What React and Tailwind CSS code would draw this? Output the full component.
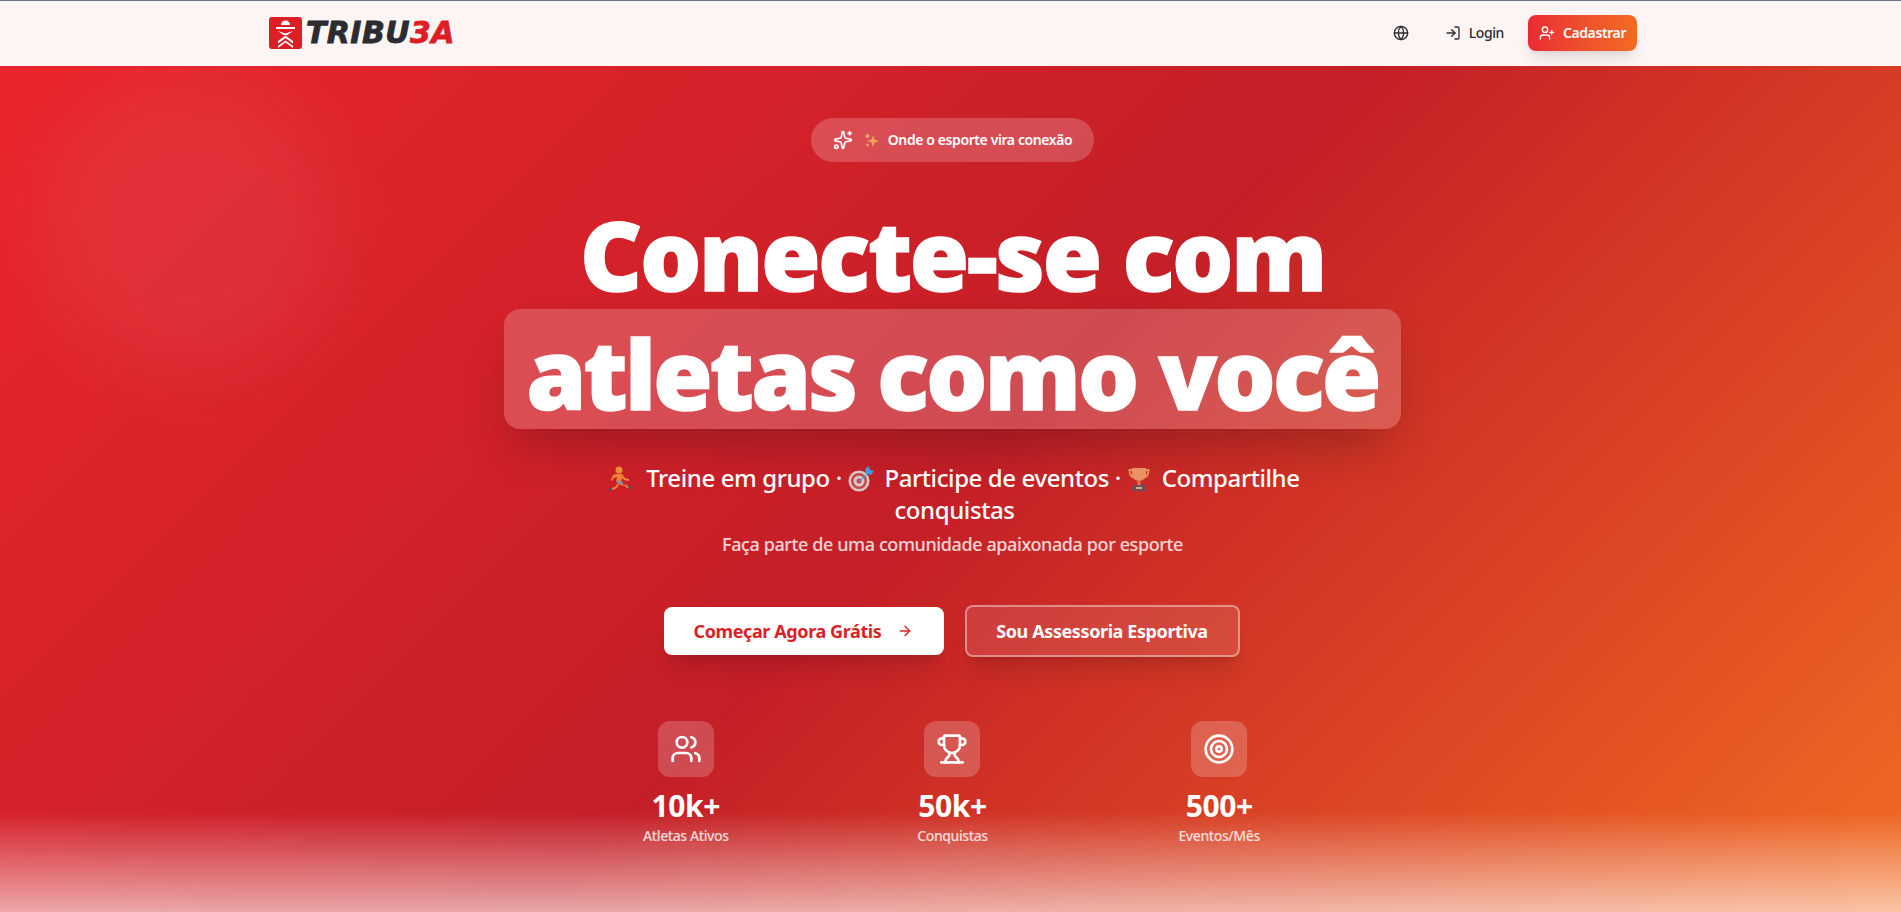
import React from 'react';
import { Globe, LogIn, UserPlus, Sparkles, ArrowRight, Users, Trophy, Target } from 'lucide-react';

const stats = [
  { icon: Users, value: '10k+', label: 'Atletas Ativos' },
  { icon: Trophy, value: '50k+', label: 'Conquistas' },
  { icon: Target, value: '500+', label: 'Eventos/Mês' },
];

function LogoMark() {
  return (
    <svg width="33" height="33" viewBox="0 0 33 33">
      <rect width="33" height="32" rx="3" fill="#dc1f26" />
      <path d="M12 8a4.500 4.500 0 0 1 9 0z" fill="#fff" />
      <path d="M7 10h19v2H7z" fill="#fff" />
      <path d="M9 14l7.500 2.500L24 14l-5.500 4h-4z" fill="#fff" />
      <path d="M9 24l7.500-5.500L24 24v2.500l-7.500-5.500L9 26.500zM9 29l7.500-5.500L24 29v2l-7.500-5.500L9 31z" fill="#fff" />
    </svg>
  );
}

function RunnerEmoji() {
  return (
    <svg width="24" height="26" viewBox="0 0 24 26" className="mr-[7px] inline-block align-[-5px]">
      <circle cx="10" cy="4" r="3.500" fill="#f08a3c" />
      <path d="M7 8h6l3 4 4 1v2l-5-1-2-2-1 4H7l1-5-3 1-2 3-1-1 2-5z" fill="#ee8236" />
      <path d="M7 15h6l1 3-3 1-2-1z" fill="#8b8f9e" />
      <path d="M12 18l6 1 2 3-2 0-2-2-5-1zM8 18l2 1-3 4-5 1v-2l4-1z" fill="#ee8236" />
      <path d="M1 22l2 0 0 3-2 0zM19 20l3 0 0 3-2 0z" fill="#48546e" />
    </svg>
  );
}

function TargetEmoji() {
  return (
    <svg width="26" height="26" viewBox="0 0 26 26" className="mr-[5px] inline-block align-[-5px]">
      <circle cx="11" cy="15" r="10.500" fill="#d9c8c8" />
      <circle cx="11" cy="15" r="8" fill="#c4474c" />
      <circle cx="11" cy="15" r="5.500" fill="#d8c6c8" />
      <circle cx="11" cy="15" r="2.500" fill="#c4474c" />
      <path d="M11 15l7-7-1-5 4-3 1 4 4 1-3 4-4-1-7 8z" fill="#3f9bdc" />
    </svg>
  );
}

function TrophyEmoji() {
  return (
    <svg width="24" height="26" viewBox="0 0 24 26" className="mr-[5px] inline-block align-[-5px]">
      <path d="M6 4H2.500c0 4 1.500 7 5 7.500M18 4h3.500c0 4-1.500 7-5 7.500" fill="none" stroke="#e8935a" strokeWidth="2" />
      <path d="M5 2h14v6c0 4-3 7-7 7s-7-3-7-7z" fill="#ec9363" />
      <path d="M10.500 14h3v5h-3z" fill="#d57a45" />
      <path d="M6 19h12l1 6H5z" fill="#6c4b63" />
      <path d="M9 21h6v2H9z" fill="#dca97c" />
    </svg>
  );
}

function SparkleEmoji() {
  return (
    <svg width="16" height="16" viewBox="0 0 16 16" className="ml-[3px] shrink-0">
      <path d="M9 3l1.500 4.500L15 9l-4.500 1.500L9 15l-1.500-4.500L3 9l4.500-1.500z" fill="#f3a35c" />
      <path d="M3.500 1l.8 2.200 2.200.8-2.200.8-.8 2.200-.8-2.200L.5 4l2.200-.8z" fill="#f6bd78" />
      <path d="M3.500 11l.6 1.400 1.400.6-1.400.6-.6 1.400-.6-1.400-1.400-.6 1.400-.6z" fill="#f6bd78" />
    </svg>
  );
}

export default function App() {
  return (
    <div className="relative h-[912px] overflow-hidden bg-white font-['Noto_Sans','Open_Sans',sans-serif] tracking-tight">
      <header className="h-[66px] border-t border-[#6d7187] bg-[#fdf4f4]">
        <div className="mx-auto flex h-[64px] max-w-[1373px] items-center justify-between pl-[5px]">
          <div className="flex items-center gap-[4px]">
            <LogoMark />
            <span className="font-['DejaVu_Sans',sans-serif] text-[30px] font-bold italic leading-none tracking-[0.4px] text-[#2c2c30] [-webkit-text-stroke:0.8px_#2c2c30]">
              TRIBU<span className="text-[#dc1f26] [-webkit-text-stroke:0.8px_#dc1f26]">3A</span>
            </span>
          </div>
          <div className="flex items-center text-[#2b2b35]">
            <Globe className="mr-[36px] h-4 w-4" />
            <LogIn className="mr-[8px] h-4 w-4" />
            <span className="mr-6 text-sm font-medium">Login</span>
            <button className="flex h-[36px] w-[109px] items-center justify-center gap-2 rounded-lg bg-gradient-to-r from-[#ea2a33] to-[#f26b22] text-sm font-semibold text-white shadow-lg">
              <UserPlus className="h-4 w-4" />
              Cadastrar
            </button>
          </div>
        </div>
      </header>

      <main className="relative h-[846px] overflow-hidden bg-[linear-gradient(135deg,#ea252d_0%,#c41f27_50%,#f26b22_100%)]">
        <div className="absolute left-[40px] top-[10px] h-[300px] w-[300px] rounded-full bg-white/[0.06] blur-2xl" />
        <div className="absolute bottom-0 left-0 right-0 h-[100px] bg-gradient-to-b from-transparent to-white/60" />

        <div className="relative flex flex-col items-center pl-1 pt-[52px] text-center text-white">
          <div className="flex h-[44px] w-[283px] items-center justify-center gap-2 rounded-full bg-white/20 text-sm font-semibold">
            <Sparkles className="h-5 w-5" />
            <SparkleEmoji />
            <span>Onde o esporte vira conexão</span>
          </div>

          <h1 className="mt-[34px] whitespace-nowrap text-[96px] font-black leading-[115px] tracking-[-2.2px] [-webkit-text-stroke:1.5px_#fff]">Conecte-se com</h1>
          <div className="mt-[-2px] flex h-[120px] w-[897px] items-center justify-center whitespace-nowrap rounded-2xl bg-white/20 pt-2 text-[96px] font-black leading-none tracking-[-2.75px] shadow-2xl [-webkit-text-stroke:1.5px_#fff]">
            atletas como você
          </div>

          <p className="mt-[33px] max-w-3xl pl-1 text-2xl font-medium leading-8">
            <RunnerEmoji /> Treine em grupo · <TargetEmoji /> Participe de eventos · <TrophyEmoji /> Compartilhe conquistas
          </p>
          <p className="mt-[4px] text-lg font-medium leading-7 text-white/80">Faça parte de uma comunidade apaixonada por esporte</p>

          <div className="mt-[47px] flex items-center gap-[21px] pr-[2px] text-lg font-bold">
            <button className="flex h-[48px] w-[280px] items-center justify-center gap-4 rounded-lg bg-white text-[#dc1f26] shadow-xl">
              Começar Agora Grátis
              <ArrowRight className="h-4 w-4" />
            </button>
            <button className="h-[52px] w-[275px] rounded-lg border-2 border-white/40 bg-white/10 shadow-xl">
              Sou Assessoria Esportiva
            </button>
          </div>

          <div className="mt-[64px] grid w-[800px] grid-cols-3">
            {stats.map((stat) => (
              <div key={stat.label} className="flex flex-col items-center">
                <div className="flex h-14 w-14 items-center justify-center rounded-xl bg-white/20">
                  <stat.icon className="h-8 w-8" />
                </div>
                <div className="mt-[11px] text-3xl font-bold leading-9">{stat.value}</div>
                <div className="mt-[2px] text-sm font-medium text-white/80">{stat.label}</div>
              </div>
            ))}
          </div>
        </div>
      </main>
    </div>
  );
}
